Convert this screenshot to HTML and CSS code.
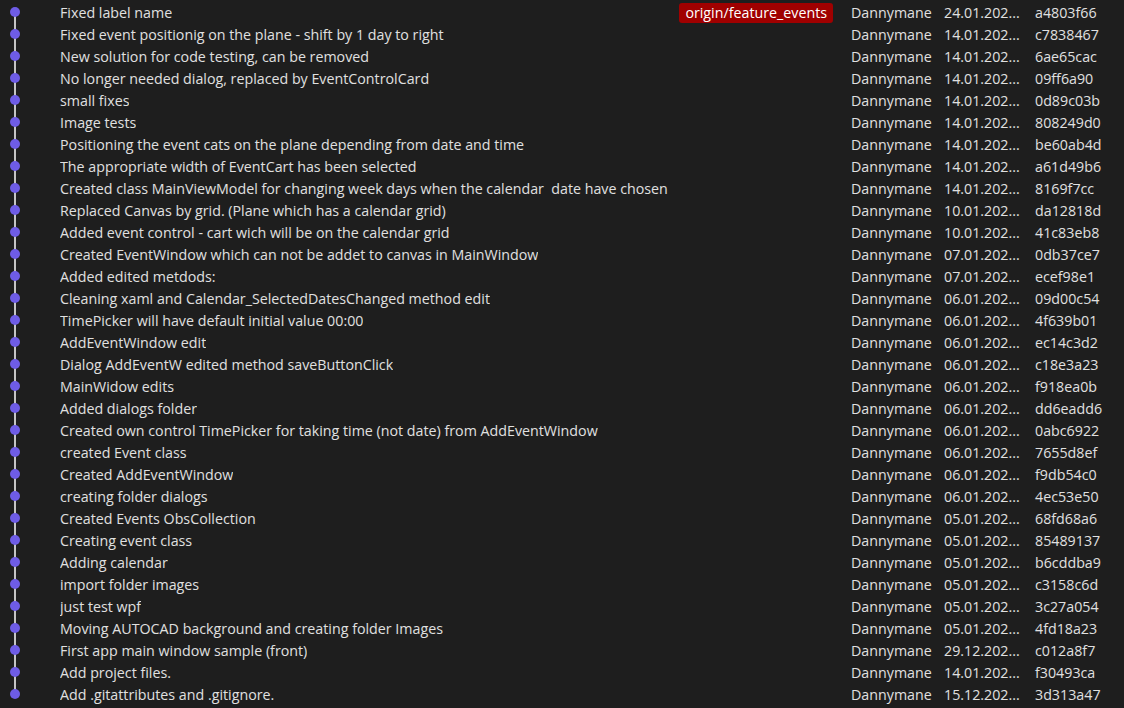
FILE: index.html
```html
<!DOCTYPE html>
<html>
<head>
<meta charset="utf-8">
<link rel="stylesheet" href="styles.css">
</head>
<body>
<div class="log">
  <div class="row first"><div class="graph"><span class="dot"></span></div><div class="msg"><span class="text">Fixed label name</span><span class="badge">origin/feature_events</span></div><div class="author">Dannymane</div><div class="date">24.01.202...</div><div class="hash">a4803f66</div></div>
  <div class="row"><div class="graph"><span class="dot"></span></div><div class="msg"><span class="text">Fixed event positionig on the plane - shift by 1 day to right</span></div><div class="author">Dannymane</div><div class="date">14.01.202...</div><div class="hash">c7838467</div></div>
  <div class="row"><div class="graph"><span class="dot"></span></div><div class="msg"><span class="text">New solution for code testing, can be removed</span></div><div class="author">Dannymane</div><div class="date">14.01.202...</div><div class="hash">6ae65cac</div></div>
  <div class="row"><div class="graph"><span class="dot"></span></div><div class="msg"><span class="text">No longer needed dialog, replaced by EventControlCard</span></div><div class="author">Dannymane</div><div class="date">14.01.202...</div><div class="hash">09ff6a90</div></div>
  <div class="row"><div class="graph"><span class="dot"></span></div><div class="msg"><span class="text">small fixes</span></div><div class="author">Dannymane</div><div class="date">14.01.202...</div><div class="hash">0d89c03b</div></div>
  <div class="row"><div class="graph"><span class="dot"></span></div><div class="msg"><span class="text">Image tests</span></div><div class="author">Dannymane</div><div class="date">14.01.202...</div><div class="hash">808249d0</div></div>
  <div class="row"><div class="graph"><span class="dot"></span></div><div class="msg"><span class="text">Positioning the event cats on the plane depending from date and time</span></div><div class="author">Dannymane</div><div class="date">14.01.202...</div><div class="hash">be60ab4d</div></div>
  <div class="row"><div class="graph"><span class="dot"></span></div><div class="msg"><span class="text">The appropriate width of EventCart has been selected</span></div><div class="author">Dannymane</div><div class="date">14.01.202...</div><div class="hash">a61d49b6</div></div>
  <div class="row"><div class="graph"><span class="dot"></span></div><div class="msg"><span class="text">Created class MainViewModel for changing week days when the calendar&nbsp; date have chosen</span></div><div class="author">Dannymane</div><div class="date">14.01.202...</div><div class="hash">8169f7cc</div></div>
  <div class="row"><div class="graph"><span class="dot"></span></div><div class="msg"><span class="text">Replaced Canvas by grid. (Plane which has a calendar grid)</span></div><div class="author">Dannymane</div><div class="date">10.01.202...</div><div class="hash">da12818d</div></div>
  <div class="row"><div class="graph"><span class="dot"></span></div><div class="msg"><span class="text">Added event control - cart wich will be on the calendar grid</span></div><div class="author">Dannymane</div><div class="date">10.01.202...</div><div class="hash">41c83eb8</div></div>
  <div class="row"><div class="graph"><span class="dot"></span></div><div class="msg"><span class="text">Created EventWindow which can not be addet to canvas in MainWindow</span></div><div class="author">Dannymane</div><div class="date">07.01.202...</div><div class="hash">0db37ce7</div></div>
  <div class="row"><div class="graph"><span class="dot"></span></div><div class="msg"><span class="text">Added edited metdods:</span></div><div class="author">Dannymane</div><div class="date">07.01.202...</div><div class="hash">ecef98e1</div></div>
  <div class="row"><div class="graph"><span class="dot"></span></div><div class="msg"><span class="text">Cleaning xaml and Calendar_SelectedDatesChanged method edit</span></div><div class="author">Dannymane</div><div class="date">06.01.202...</div><div class="hash">09d00c54</div></div>
  <div class="row"><div class="graph"><span class="dot"></span></div><div class="msg"><span class="text">TimePicker will have default initial value 00:00</span></div><div class="author">Dannymane</div><div class="date">06.01.202...</div><div class="hash">4f639b01</div></div>
  <div class="row"><div class="graph"><span class="dot"></span></div><div class="msg"><span class="text">AddEventWindow edit</span></div><div class="author">Dannymane</div><div class="date">06.01.202...</div><div class="hash">ec14c3d2</div></div>
  <div class="row"><div class="graph"><span class="dot"></span></div><div class="msg"><span class="text">Dialog AddEventW edited method saveButtonClick</span></div><div class="author">Dannymane</div><div class="date">06.01.202...</div><div class="hash">c18e3a23</div></div>
  <div class="row"><div class="graph"><span class="dot"></span></div><div class="msg"><span class="text">MainWidow edits</span></div><div class="author">Dannymane</div><div class="date">06.01.202...</div><div class="hash">f918ea0b</div></div>
  <div class="row"><div class="graph"><span class="dot"></span></div><div class="msg"><span class="text">Added dialogs folder</span></div><div class="author">Dannymane</div><div class="date">06.01.202...</div><div class="hash">dd6eadd6</div></div>
  <div class="row"><div class="graph"><span class="dot"></span></div><div class="msg"><span class="text">Created own control TimePicker for taking time (not date) from AddEventWindow</span></div><div class="author">Dannymane</div><div class="date">06.01.202...</div><div class="hash">0abc6922</div></div>
  <div class="row"><div class="graph"><span class="dot"></span></div><div class="msg"><span class="text">created Event class</span></div><div class="author">Dannymane</div><div class="date">06.01.202...</div><div class="hash">7655d8ef</div></div>
  <div class="row"><div class="graph"><span class="dot"></span></div><div class="msg"><span class="text">Created AddEventWindow</span></div><div class="author">Dannymane</div><div class="date">06.01.202...</div><div class="hash">f9db54c0</div></div>
  <div class="row"><div class="graph"><span class="dot"></span></div><div class="msg"><span class="text">creating folder dialogs</span></div><div class="author">Dannymane</div><div class="date">06.01.202...</div><div class="hash">4ec53e50</div></div>
  <div class="row"><div class="graph"><span class="dot"></span></div><div class="msg"><span class="text">Created Events ObsCollection</span></div><div class="author">Dannymane</div><div class="date">05.01.202...</div><div class="hash">68fd68a6</div></div>
  <div class="row"><div class="graph"><span class="dot"></span></div><div class="msg"><span class="text">Creating event class</span></div><div class="author">Dannymane</div><div class="date">05.01.202...</div><div class="hash">85489137</div></div>
  <div class="row"><div class="graph"><span class="dot"></span></div><div class="msg"><span class="text">Adding calendar</span></div><div class="author">Dannymane</div><div class="date">05.01.202...</div><div class="hash">b6cddba9</div></div>
  <div class="row"><div class="graph"><span class="dot"></span></div><div class="msg"><span class="text">import folder images</span></div><div class="author">Dannymane</div><div class="date">05.01.202...</div><div class="hash">c3158c6d</div></div>
  <div class="row"><div class="graph"><span class="dot"></span></div><div class="msg"><span class="text">just test wpf</span></div><div class="author">Dannymane</div><div class="date">05.01.202...</div><div class="hash">3c27a054</div></div>
  <div class="row"><div class="graph"><span class="dot"></span></div><div class="msg"><span class="text">Moving AUTOCAD background and creating folder Images</span></div><div class="author">Dannymane</div><div class="date">05.01.202...</div><div class="hash">4fd18a23</div></div>
  <div class="row"><div class="graph"><span class="dot"></span></div><div class="msg"><span class="text">First app main window sample (front)</span></div><div class="author">Dannymane</div><div class="date">29.12.202...</div><div class="hash">c012a8f7</div></div>
  <div class="row"><div class="graph"><span class="dot"></span></div><div class="msg"><span class="text">Add project files.</span></div><div class="author">Dannymane</div><div class="date">14.01.202...</div><div class="hash">f30493ca</div></div>
  <div class="row last"><div class="graph"><span class="dot"></span></div><div class="msg"><span class="text">Add .gitattributes and .gitignore.</span></div><div class="author">Dannymane</div><div class="date">15.12.202...</div><div class="hash">3d313a47</div></div>
</div>
</body>
</html>
```

FILE: styles.css
```css
html, body {
  margin: 0;
  padding: 0;
  background: #1e1e1e;
  height: 100%;
  overflow: hidden;
}
.log {
  padding-top: 2px;
  font-family: "Open Sans", "Noto Sans", sans-serif;
  font-size: 14.25px;
  color: #e0e0e0;
}
.row {
  display: grid;
  grid-template-columns: 60px 791px 93px 91px 1fr;
  height: 22px;
  line-height: 22px;
  white-space: nowrap;
}
.graph {
  position: relative;
}
.graph::before {
  content: "";
  position: absolute;
  left: 14px;
  width: 2px;
  top: 0;
  bottom: 0;
  background: #c4c4c4;
}
.row.first .graph::before { top: 10px; }
.row.last .graph::before { bottom: 12px; }
.dot {
  position: absolute;
  left: 10px;
  top: 5px;
  width: 10px;
  height: 10px;
  border-radius: 50%;
  background: #6e5ce6;
}
.msg {
  display: flex;
  justify-content: space-between;
  align-items: center;
  overflow: hidden;
}
.text {
  overflow: hidden;
}
.badge {
  margin-right: 18px;
  background: #a00000;
  color: #ffffff;
  border-radius: 3px;
  height: 20px;
  line-height: 20px;
  padding: 0 6px;
}
```
